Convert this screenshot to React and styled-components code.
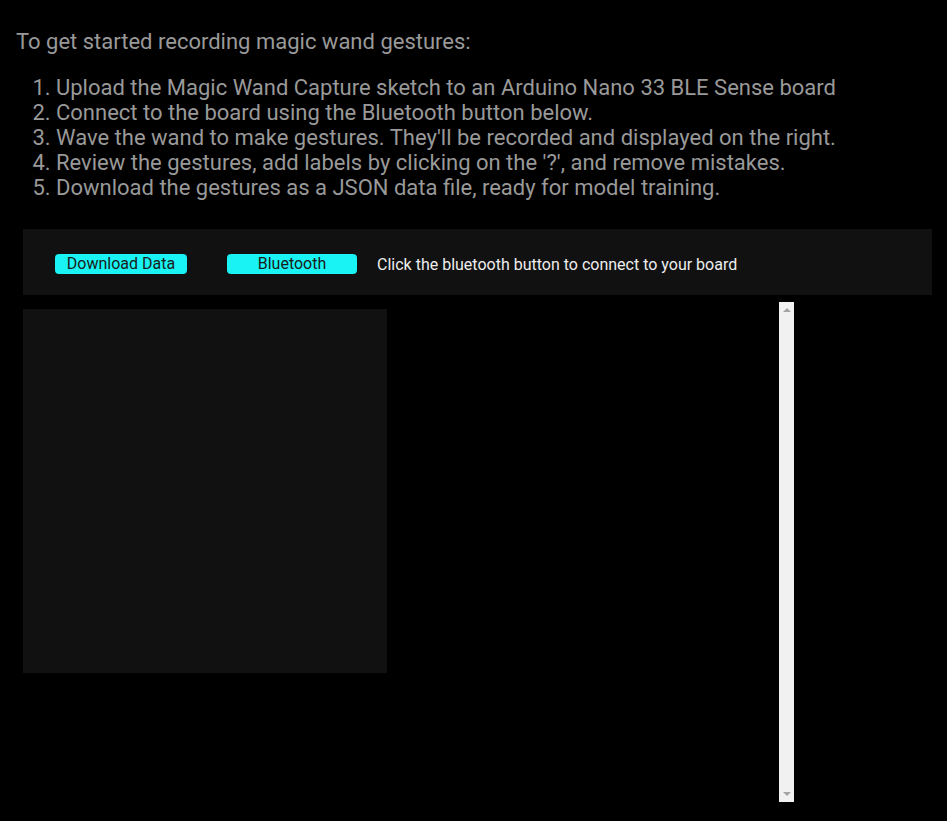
import React from "react";
import styled, { createGlobalStyle } from "styled-components";

const GlobalStyle = createGlobalStyle`
  html, body {
    margin: 0;
    background: #000;
  }
  body {
    font-family: Roboto, "Liberation Sans", sans-serif;
  }
`;

const Page = styled.div`
  padding: 29px 16px 0 16px;
  color: #999;
`;

const Intro = styled.p`
  margin: 0;
  font-size: 22px;
  line-height: 25px;
`;

const Steps = styled.ol`
  margin: 21px 0 0 0;
  padding-left: 40px;
  font-size: 22px;
  line-height: 25px;
`;

const Toolbar = styled.div`
  display: flex;
  align-items: center;
  width: 909px;
  height: 66px;
  margin: 29px 0 0 7px;
  padding: 4px 0 0 32px;
  box-sizing: border-box;
  background: #111;
`;

const ActionButton = styled.button`
  width: ${(p) => p.$w}px;
  height: 20px;
  margin-right: ${(p) => p.$gap}px;
  padding: 0;
  border: none;
  border-radius: 4px;
  background: #19f3f3;
  color: #1a1a1a;
  font-family: Roboto, "Liberation Sans", sans-serif;
  font-size: 16px;
  line-height: 20px;
  cursor: pointer;
`;

const Status = styled.span`
  color: #eee;
  font-size: 16px;
`;

const Workspace = styled.div`
  display: flex;
  align-items: flex-start;
  margin-top: 7px;
`;

const Canvas = styled.div`
  width: 364px;
  height: 364px;
  margin: 7px;
  background: #111;
`;

const GestureList = styled.div`
  display: flex;
  width: 400px;
  height: 500px;
`;

const ListBody = styled.div`
  flex: 1;
`;

const ScrollTrack = styled.div`
  display: flex;
  flex-direction: column;
  justify-content: space-between;
  align-items: center;
  width: 15px;
  padding: 6px 0;
  box-sizing: border-box;
  background: #f1f1f1;
`;

const Arrow = styled.span`
  width: 0;
  height: 0;
  border-left: 4px solid transparent;
  border-right: 4px solid transparent;
  ${(p) => (p.$down ? "border-top" : "border-bottom")}: 4px solid #a3a3a3;
`;

const steps = [
  "Upload the Magic Wand Capture sketch to an Arduino Nano 33 BLE Sense board",
  "Connect to the board using the Bluetooth button below.",
  "Wave the wand to make gestures. They'll be recorded and displayed on the right.",
  "Review the gestures, add labels by clicking on the '?', and remove mistakes.",
  "Download the gestures as a JSON data file, ready for model training.",
];

export default function App() {
  return (
    <>
      <GlobalStyle />
      <Page>
        <Intro>To get started recording magic wand gestures:</Intro>
        <Steps>
          {steps.map((s) => (
            <li key={s}>{s}</li>
          ))}
        </Steps>
        <Toolbar>
          <ActionButton $w={132} $gap={40}>Download Data</ActionButton>
          <ActionButton $w={130} $gap={20}>Bluetooth</ActionButton>
          <Status>Click the bluetooth button to connect to your board</Status>
        </Toolbar>
        <Workspace>
          <Canvas />
          <GestureList>
            <ListBody />
            <ScrollTrack>
              <Arrow />
              <Arrow $down />
            </ScrollTrack>
          </GestureList>
        </Workspace>
      </Page>
    </>
  );
}
